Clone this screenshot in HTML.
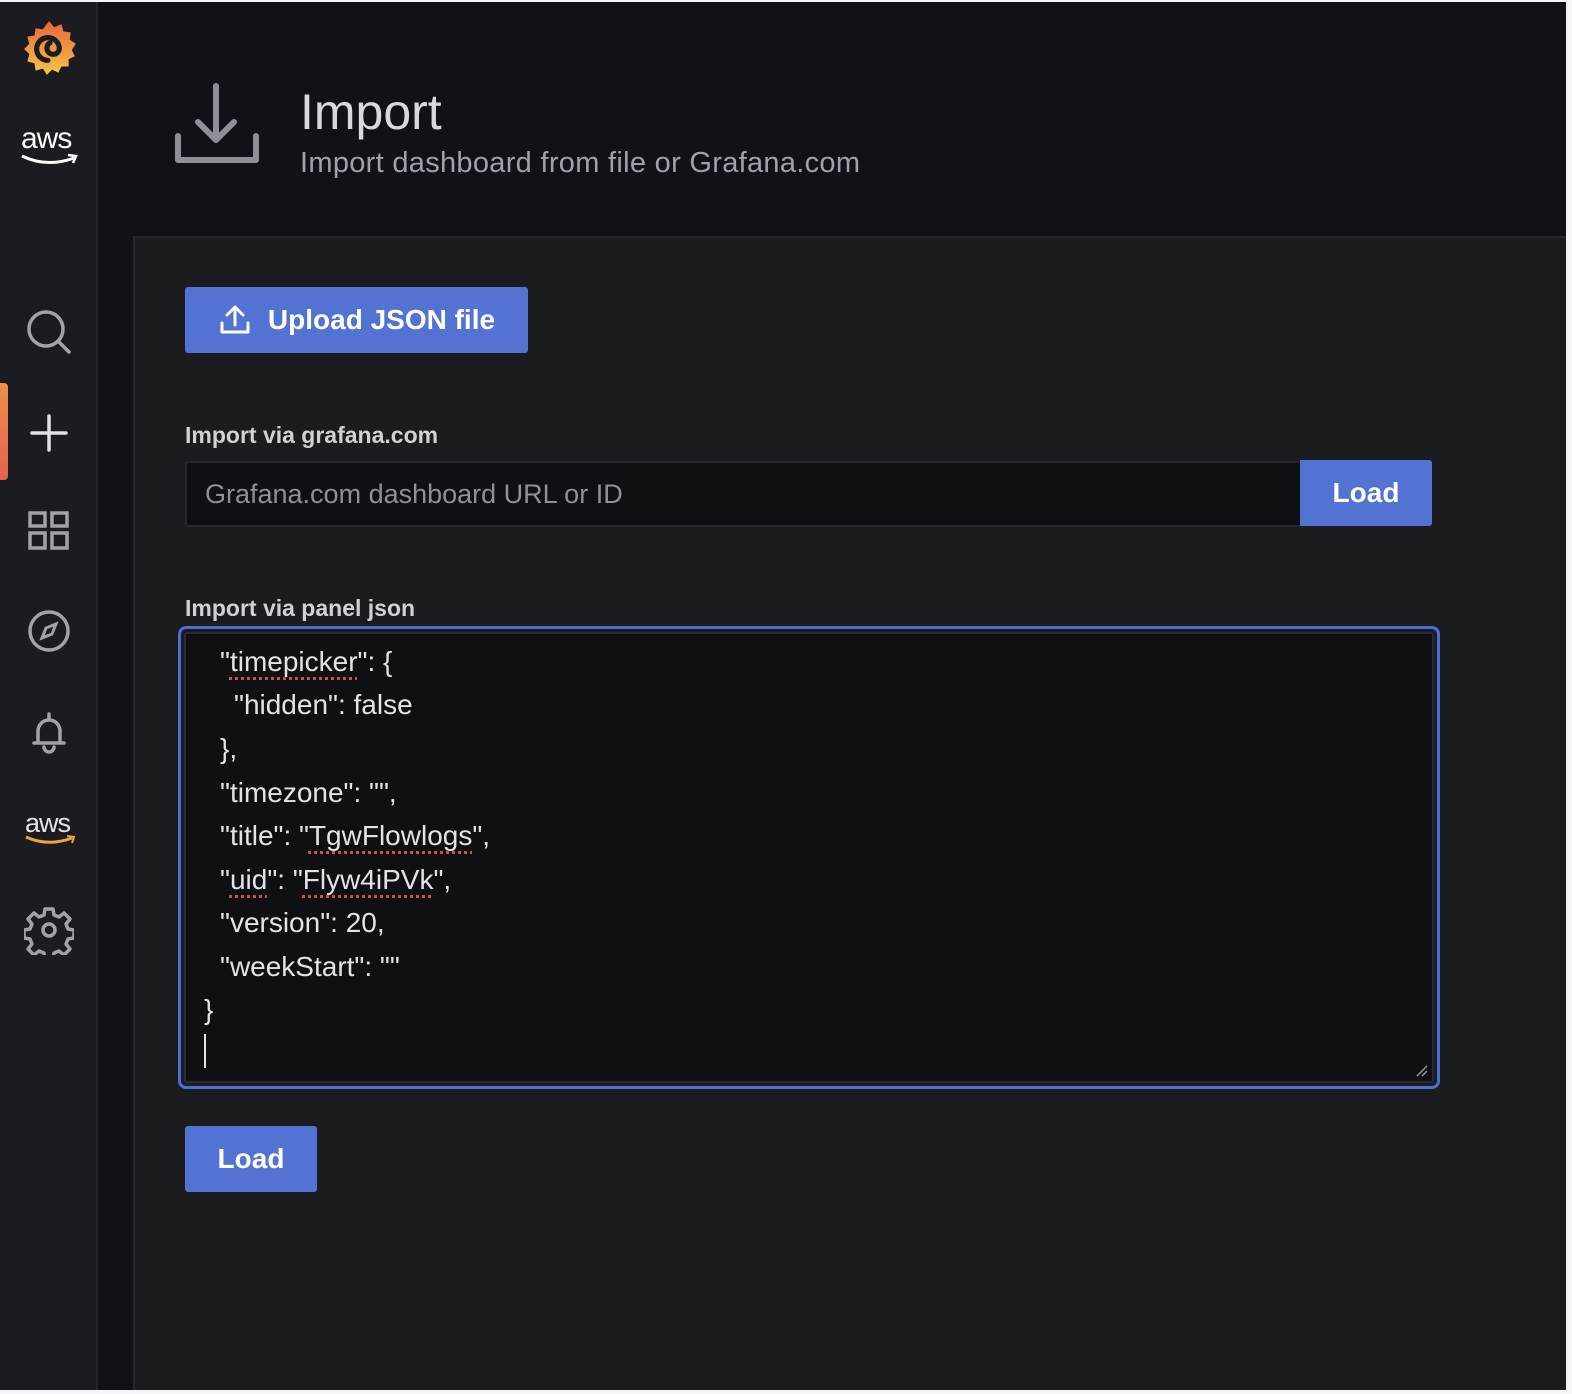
<!DOCTYPE html>
<html><head><meta charset="utf-8"><style>
*{margin:0;padding:0;box-sizing:border-box}
html,body{width:1572px;height:1394px;overflow:hidden;background:#f4f5f5}
body{font-family:"Liberation Sans",sans-serif;position:relative}
#app{position:absolute;left:0;top:2px;width:1566px;height:1388px;background:#111217}
#side{position:absolute;left:0;top:0;width:98px;height:100%;background:#1b1c21;border-right:2px solid #24262c}
#panel{position:absolute;left:133px;top:234px;right:0;bottom:0;background:#1b1c20;border-top:2px solid #25272c;border-left:2px solid #25272c}
.ic{position:absolute;left:24px}
h1{position:absolute;left:300px;top:81px;font-size:50px;font-weight:400;color:#d8d9dc}
.sub{position:absolute;left:300px;top:145px;font-size:29px;letter-spacing:0.3px;color:#9fa2aa}
.btn{position:absolute;background:#5273d2;color:#fff;font-weight:700;border-radius:3px;display:flex;align-items:center;justify-content:center}
.lbl{position:absolute;left:185px;font-size:23px;font-weight:700;color:#d0d1d4}
#url{position:absolute;left:185px;top:459px;width:1116px;height:66px;background:#0f1014;border:2px solid #26282d;border-right:none;border-radius:3px 0 0 3px;color:#8e9199;font-size:27px;padding:16px 18px}
#ta{position:absolute;left:178px;top:624px;width:1262px;height:463px;border:3px solid #4c6fd6;border-radius:8px;padding:3px;}
#ta .in{width:100%;height:100%;background:#0f1014;border:2px solid #2a2c31;border-radius:3px;position:relative;font-size:28px;color:#e2e3e6;}
#ta .in div{position:absolute;white-space:pre}
.sq{text-decoration:underline dotted #d0503f;text-underline-offset:6px;text-decoration-thickness:3px}
</style></head><body>
<div id="app">
<div id="side">
 <svg class="ic" style="left:19px;top:17px" width="60" height="62" viewBox="0 0 58 60">
  <defs><linearGradient id="g" x1="0" y1="0" x2="0" y2="1"><stop offset="0" stop-color="#e9653a"/><stop offset="1" stop-color="#f6c54a"/></linearGradient></defs>
  <path d="M29 2l5 6 7-3 2 7 7 1-1 7 6 4-4 6 3 6-6 3 0 7-7 0-3 6-6-3-5 5-4-6-7 2-1-7-7-2 2-7-5-5 5-5-2-7 7-1 1-7 7 1z" fill="url(#g)"/>
  <path d="M28 40a11 11 0 1 1 11-12a6 6 0 1 1-9-5" stroke="#1b1c21" stroke-width="5" fill="none" stroke-linecap="round"/>
 </svg>
 <div style="position:absolute;left:21px;top:120px;color:#fff;font-size:30px;letter-spacing:-1px">aws</div>
 <svg style="position:absolute;left:20px;top:150px" width="60" height="20"><path d="M2 4q25 12 52 2" stroke="#fff" stroke-width="3" fill="none"/><path d="M48 3l8 1-3 7" stroke="#fff" stroke-width="2.5" fill="none"/></svg>
 <svg class="ic" style="top:305px" width="50" height="50" viewBox="0 0 50 50"><circle cx="22" cy="22" r="17" stroke="#a0a3a9" stroke-width="3.5" fill="none"/><path d="M35 35l10 10" stroke="#a0a3a9" stroke-width="3.5" stroke-linecap="round"/></svg>
 <div style="position:absolute;left:0;top:381px;width:8px;height:97px;background:linear-gradient(#f08f4e,#e0634a);border-radius:0 4px 4px 0"></div>
 <svg class="ic" style="top:408px" width="50" height="46"><path d="M25 6v34M8 23h34" stroke="#e0e1e4" stroke-width="3.5" stroke-linecap="round"/></svg>
 <svg class="ic" style="top:505px" width="50" height="50"><g fill="none" stroke="#a0a3a9" stroke-width="3.5"><rect x="6" y="6" width="15" height="13"/><rect x="28" y="6" width="15" height="13"/><rect x="6" y="26" width="15" height="15"/><rect x="28" y="26" width="15" height="15"/></g></svg>
 <svg class="ic" style="top:604px" width="50" height="50"><circle cx="25" cy="25" r="19" stroke="#a0a3a9" stroke-width="3.5" fill="none"/><path d="M32 18l-4 10-10 4 4-10z" stroke="#a0a3a9" stroke-width="3" fill="none"/></svg>
 <svg class="ic" style="top:705px" width="50" height="50"><path d="M10 36h30M14 36V24a11 11 0 0 1 22 0v12M25 7v6M20 40a5 5 0 0 0 10 0" stroke="#a0a3a9" stroke-width="3.5" fill="none" stroke-linecap="round"/></svg>
 <div style="position:absolute;left:25px;top:806px;color:#e4e5e7;font-size:27px;letter-spacing:-1px">aws</div>
 <svg style="position:absolute;left:24px;top:832px" width="54" height="16"><path d="M2 3q22 10 46 1" stroke="#f1a33b" stroke-width="3" fill="none"/><path d="M43 2l7 1-2 6" stroke="#f1a33b" stroke-width="2" fill="none"/></svg>
 <svg class="ic" style="top:903px" width="50" height="50" viewBox="0 0 50 50"><path d="M21 4h8l1 6 5 2 5-4 6 6-4 5 2 5 6 1v8l-6 1-2 5 4 5-6 6-5-4-5 2-1 6h-8l-1-6-5-2-5 4-6-6 4-5-2-5-6-1v-8l6-1 2-5-4-5 6-6 5 4 5-2z" stroke="#a0a3a9" stroke-width="3.5" fill="none" stroke-linejoin="round"/><circle cx="25" cy="25" r="6" stroke="#a0a3a9" stroke-width="3.5" fill="none"/></svg>
</div>
<svg style="position:absolute;left:172px;top:80px" width="90" height="90"><path d="M44 4v54M26 40l18 18 18-18" stroke="#8e9099" stroke-width="6" fill="none" stroke-linecap="round" stroke-linejoin="round"/><path d="M6 54v24h78V54" stroke="#8e9099" stroke-width="6" fill="none" stroke-linecap="round" stroke-linejoin="round"/></svg>
<h1>Import</h1>
<div class="sub">Import dashboard from file or Grafana.com</div>
<div id="panel"></div>
<div class="btn" style="left:185px;top:285px;width:343px;height:66px;font-size:28px"><svg width="34" height="34" style="margin-right:16px"><path d="M17 4v18M9 12l8-8 8 8M4 20v9h26v-9" stroke="#fff" stroke-width="3" fill="none" stroke-linecap="round" stroke-linejoin="round"/></svg>Upload JSON file</div>
<div class="lbl" style="top:420px">Import via grafana.com</div>
<div id="url">Grafana.com dashboard URL or ID</div>
<div class="btn" style="left:1300px;top:458px;width:132px;height:66px;font-size:28px;border-radius:0 3px 3px 0">Load</div>
<div class="lbl" style="top:593px">Import via panel json</div>
<div id="ta"><div class="in">
<div style="left:34px;top:12px">"<span class="sq">timepicker</span>": {</div>
<div style="left:48px;top:55px">"hidden": false</div>
<div style="left:34px;top:99px">},</div>
<div style="left:34px;top:143px">"timezone": "",</div>
<div style="left:34px;top:186px">"title": "<span class="sq">TgwFlowlogs</span>",</div>
<div style="left:34px;top:230px">"<span class="sq">uid</span>": "<span class="sq">Flyw4iPVk</span>",</div>
<div style="left:34px;top:273px">"version": 20,</div>
<div style="left:34px;top:317px">"weekStart": ""</div>
<div style="left:18px;top:360px">}</div>
<div style="left:18px;top:400px;width:2px;height:34px;background:#e2e3e6"></div>
<svg style="position:absolute;right:3px;bottom:3px" width="14" height="14"><path d="M2 12L12 2M7 12l5-5" stroke="#999" stroke-width="1.5"/></svg>
</div></div>
<div class="btn" style="left:185px;top:1124px;width:132px;height:66px;font-size:28px">Load</div>
</div>
</body></html>
